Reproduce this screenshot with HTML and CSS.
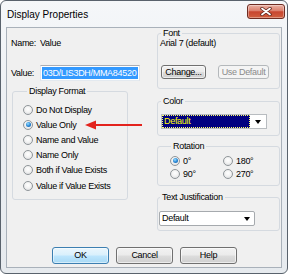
FILE: index.html
```html
<!DOCTYPE html>
<html lang="en">
<head>
  <meta charset="UTF-8">
  <title>Display Properties</title>
  <link rel="stylesheet" href="styles.css">
</head>
<body>
  <div class="window">
    <div class="titlebar">
      <span class="title">Display Properties</span>
      <button class="close" aria-label="Close">
        <svg width="12" height="9" viewBox="0 0 12 9">
          <path d="M2 1.5 L10 7.5 M10 1.5 L2 7.5" stroke="#5b2118" stroke-width="3.4" stroke-linecap="round"/>
          <path d="M2 1.5 L10 7.5 M10 1.5 L2 7.5" stroke="#ffffff" stroke-width="1.8" stroke-linecap="round"/>
        </svg>
      </button>
    </div>

    <div class="client">
      <div class="panes">
        <div class="left">
          <div class="field-row name-row">
            <span>Name:</span>
            <span>Value</span>
          </div>
          <div class="field-row value-row">
            <span>Value:</span>
            <div class="textbox"><span class="selected">03D/LIS3DH/MMA84520</span></div>
          </div>

          <fieldset class="group format">
            <legend>Display Format</legend>
            <div class="radio-list">
              <label class="radio"><span class="dot"></span>Do Not Display</label>
              <label class="radio checked"><span class="dot"></span>Value Only</label>
              <label class="radio"><span class="dot"></span>Name and Value</label>
              <label class="radio"><span class="dot"></span>Name Only</label>
              <label class="radio"><span class="dot"></span>Both if Value Exists</label>
              <label class="radio"><span class="dot"></span>Value if Value Exists</label>
            </div>
          </fieldset>
        </div>

        <div class="right">
          <fieldset class="group font">
            <legend>Font</legend>
            <div class="font-name">Arial 7 (default)</div>
            <div class="font-buttons">
              <button class="btn change">Change...</button>
              <button class="btn use-default" disabled>Use Default</button>
            </div>
          </fieldset>

          <fieldset class="group color">
            <legend>Color</legend>
            <div class="select navy">
              <span class="select-value">Default</span>
              <span class="select-arrow"></span>
            </div>
          </fieldset>

          <fieldset class="group rotation">
            <legend>Rotation</legend>
            <div class="rotation-grid">
              <label class="radio checked"><span class="dot"></span>0°</label>
              <label class="radio"><span class="dot"></span>180°</label>
              <label class="radio"><span class="dot"></span>90°</label>
              <label class="radio"><span class="dot"></span>270°</label>
            </div>
          </fieldset>

          <fieldset class="group justify">
            <legend>Text Justification</legend>
            <div class="select plain">
              <span class="select-value">Default</span>
              <span class="select-arrow"></span>
            </div>
          </fieldset>
        </div>
      </div>

      <div class="actions">
        <button class="btn default">OK</button>
        <button class="btn">Cancel</button>
        <button class="btn">Help</button>
      </div>
    </div>

    <!-- annotation arrow pointing at "Value Only" -->
    <svg class="callout" width="60" height="12" viewBox="0 0 60 12">
      <line x1="9" y1="6" x2="58" y2="6" stroke="#e3231d" stroke-width="2.2"/>
      <polygon points="1,6 12,1.5 12,10.5" fill="#e3231d"/>
    </svg>
  </div>
</body>
</html>
```

FILE: styles.css
```css
* {
  margin: 0;
  padding: 0;
  box-sizing: border-box;
}

body {
  background: #ffffff;
  font-family: 'Liberation Sans', Arial, sans-serif;
  font-size: 9px;
  letter-spacing: -0.3px;
  color: #000;
}

button {
  font-family: inherit;
  font-size: inherit;
  letter-spacing: inherit;
  color: inherit;
}

.window {
  position: relative;
  width: 288px;
  height: 274px;
  border: 1px solid #59626c;
  border-radius: 6px;
  padding: 0 5px 5px 5px;
  background: linear-gradient(180deg, #f5f7f9 0%, #eceff3 40%, #e6eaee 100%);
  display: flex;
  flex-direction: column;
}

.titlebar {
  height: 26px;
  display: flex;
  justify-content: space-between;
  align-items: flex-start;
}

.title {
  margin: 8px 0 0 1px;
  font-size: 10px;
  line-height: 12px;
  letter-spacing: 0;
}

.close {
  width: 38px;
  height: 15px;
  margin: 3px -3px 0 0;
  border: 1px solid #6e2c22;
  border-radius: 3px;
  background: linear-gradient(180deg, #eab1a4 0%, #dc7f6c 45%, #c8452f 52%, #d0603f 100%);
  display: flex;
  align-items: center;
  justify-content: center;
  box-shadow: inset 0 0 0 1px rgba(255, 255, 255, 0.35);
}

.client {
  height: 241px;
  border: 1px solid #a9b1ba;
  background: #f0f0f0;
  display: flex;
  flex-direction: column;
}

.panes {
  display: flex;
}

.left {
  width: 150px;
}

.right {
  width: 123px;
}

.field-row {
  display: flex;
  align-items: center;
  padding-left: 4px;
}

.field-row > span:first-child {
  width: 29px;
}

.name-row {
  margin-top: 9px;
  line-height: 12px;
}

.value-row {
  margin-top: 16px;
  height: 16px;
}

.textbox {
  width: 100px;
  height: 16px;
  border: 1px solid #abadb3;
  border-color: #abadb3 #dbdfe6 #e3e9ef #e2e3ea;
  background: #fff;
  padding: 1px;
  overflow: hidden;
  white-space: nowrap;
}

.selected {
  display: block;
  background: #3399ff;
  color: #fff;
  line-height: 12px;
  padding-left: 1px;
}

.group {
  border: 1px solid #d5dae0;
  border-radius: 3px;
  padding: 0 2px;
}

.group legend {
  line-height: 10px;
  padding: 0 2px;
  margin-left: 1px;
}

.format {
  margin: 5px 0 0 5px;
  width: 116px;
  padding: 0 0 6px 10px;
}

.format legend {
  margin-left: 4px;
}

.radio-list {
  margin-top: 6px;
}

.radio {
  display: flex;
  align-items: center;
  gap: 3px;
  height: 15.2px;
}

.dot {
  width: 10px;
  height: 10px;
  border-radius: 50%;
  border: 1px solid #8f9599;
  background: radial-gradient(circle at 50% 40%, #ffffff 0%, #f3f3f3 45%, #d6d8da 100%);
  display: flex;
  align-items: center;
  justify-content: center;
}

.radio.checked .dot::after {
  content: "";
  width: 5px;
  height: 5px;
  border-radius: 50%;
  background: radial-gradient(circle at 40% 35%, #9be0ff 0%, #2c8ad8 50%, #0d4f96 100%);
}

.font-name {
  line-height: 11px;
}

.font-buttons {
  display: flex;
  margin-top: 16px;
  padding-bottom: 9px;
  padding-left: 1px;
}

.btn {
  height: 14px;
  border: 1px solid #707070;
  border-radius: 3px;
  background: linear-gradient(180deg, #f2f2f2 0%, #ebebeb 48%, #dddddd 52%, #cfcfcf 100%);
  box-shadow: inset 0 0 0 1px rgba(255, 255, 255, 0.6);
  line-height: 12px;
  text-align: center;
}

.change {
  width: 45px;
}

.use-default {
  width: 51px;
  margin-left: 12px;
  color: #8a8a8a;
  border-color: #b4b8bb;
  background: #f4f4f4;
  box-shadow: none;
}

.color {
  margin-top: 7px;
}

.select {
  height: 15px;
  border: 1px solid #b8bcc0;
  display: flex;
  background: #fff;
  margin-top: 8px;
  margin-bottom: 6px;
}

.navy {
  width: 106px;
  margin-left: 1px;
}

.navy .select-value {
  flex: 1;
  background: #000080;
  color: #ffff00;
  border: 1px dotted #ffff66;
  line-height: 11px;
  padding-left: 1px;
}

.select-value {
  line-height: 13px;
  padding-left: 2px;
}

.select-arrow {
  width: 16px;
  display: flex;
  align-items: center;
  justify-content: center;
}

.select-arrow::after {
  content: "";
  border-left: 3px solid transparent;
  border-right: 3px solid transparent;
  border-top: 4px solid #000;
}

.rotation {
  margin-top: 5px;
  padding-left: 12px;
}

.rotation-grid {
  display: grid;
  grid-template-columns: 53px 1fr;
  grid-auto-rows: 13px;
  margin-top: 3px;
  padding-bottom: 5px;
}

.rotation .radio {
  height: 13px;
}

.justify {
  margin-top: 6px;
  padding-left: 1px;
}

.plain {
  width: 96px;
  margin-top: 9px;
  margin-bottom: 4px;
  border-color: #a6aaae;
  border-radius: 2px;
  justify-content: space-between;
}

.plain .select-value {
  flex: 1;
}

.plain .select-arrow {
  width: 14px;
}

.actions {
  margin-top: auto;
  display: flex;
  gap: 7px;
  padding: 0 0 3px 45px;
}

.actions .btn {
  width: 57px;
  height: 17px;
  line-height: 15px;
}

.actions .btn.default {
  border-color: #3c7fb1;
  background: linear-gradient(180deg, #eaf6fd 0%, #d9f0fc 48%, #bee6fd 52%, #a7d9f5 100%);
  box-shadow: inset 0 0 0 1px rgba(255, 255, 255, 0.5);
}

.callout {
  position: absolute;
  left: 83px;
  top: 118px;
}
```
